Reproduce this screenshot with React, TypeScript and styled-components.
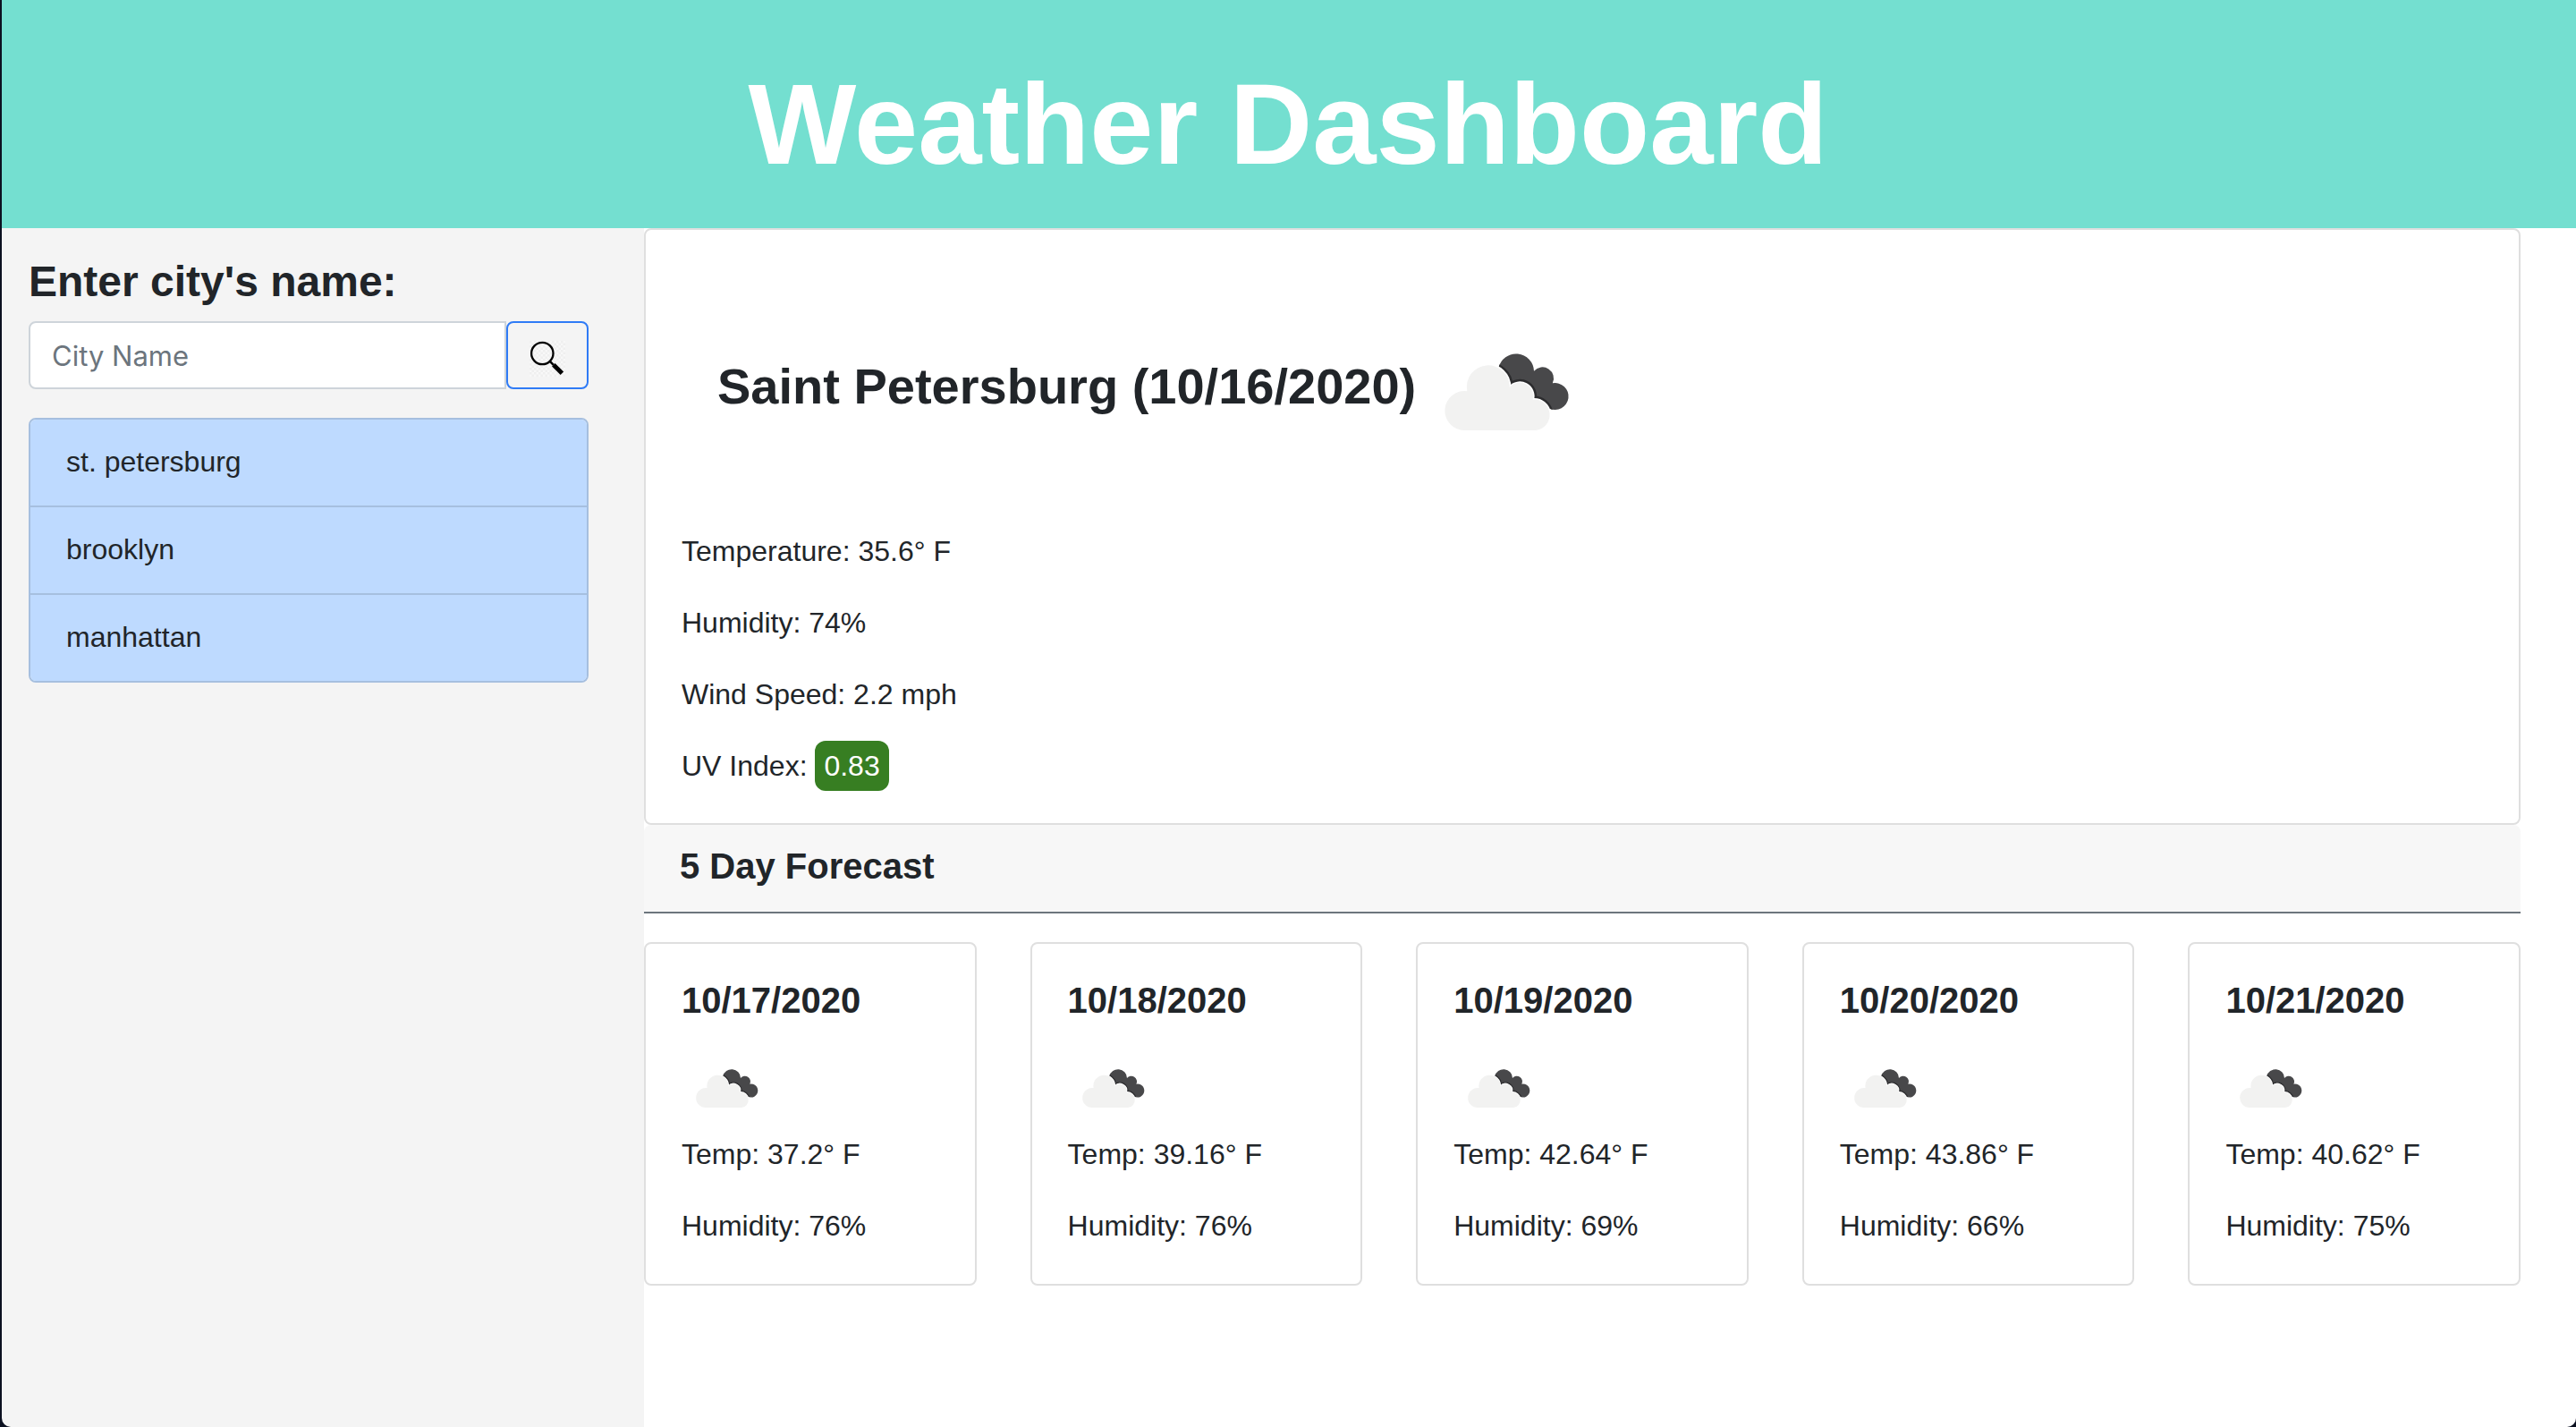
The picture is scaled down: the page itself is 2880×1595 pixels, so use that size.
import React, { useId } from "react";
import styled, { createGlobalStyle } from "styled-components";

const ink = "#212529";
const line = "#dfdfdf";
const frame = "#0b1020";

const GlobalStyle = createGlobalStyle`
  *, *::before, *::after { box-sizing: border-box; }
  body {
    margin: 0;
    background: #fff;
    color: ${ink};
    font-family: "Liberation Sans", "Helvetica Neue", Arial, sans-serif;
    font-size: 32px;
    line-height: 48px;
  }
  h1, h2, h3, p, ul { margin: 0; padding: 0; }
`;

const Page = styled.div`
  min-height: 100vh;
  display: flex;
  flex-direction: column;
`;

const WindowFrame = styled.div`
  position: fixed;
  inset: 0 0 0 2px;
  border-radius: 0 0 10px 10px;
  box-shadow: 0 0 0 16px ${frame};
  pointer-events: none;
`;

const Header = styled.header`
  padding: 62px 32px 39px;
  background: #74dfd0;
  color: #fff;
  text-align: center;
`;

const Title = styled.h1`
  font-size: 128px;
  line-height: 154px;
`;

const Layout = styled.div`
  flex: 1;
  display: grid;
  grid-template-columns: minmax(0, 1fr) minmax(0, 3fr);
`;

const Sidebar = styled.aside`
  padding: 31px 62px 32px 32px;
  background: #f4f4f4;
`;

const SearchLabel = styled.label`
  display: block;
  margin-bottom: 15px;
  font-size: 48px;
  line-height: 58px;
  font-weight: 700;
`;

const SearchRow = styled.div`
  display: flex;
  margin-bottom: 32px;
`;

const SearchInput = styled.input`
  flex: 1;
  min-width: 0;
  height: 76px;
  padding: 12px 24px;
  border: 2px solid #ced4da;
  border-radius: 8px 0 0 8px;
  background: #fff;
  color: ${ink};
  font-family: Inter, "Liberation Sans", sans-serif;
  font-size: 31px;
  &::placeholder { color: #6c757d; opacity: 1; }
`;

const SearchButton = styled.button`
  display: flex;
  align-items: center;
  justify-content: center;
  width: 92px;
  height: 76px;
  padding: 8px 0 0;
  border: 2px solid #2f7bf6;
  border-radius: 8px;
  background: transparent;
`;

const CityList = styled.ul`
  list-style: none;
  border: 2px solid #a6bfdf;
  border-radius: 8px;
  overflow: hidden;
`;

const CityItem = styled.li`
  & + & { border-top: 2px solid #a6bfdf; }
`;

const CityButton = styled.button`
  display: block;
  width: 100%;
  padding: 23px 40px 25px;
  border: 0;
  background: #bedaff;
  color: ${ink};
  font: inherit;
  text-align: left;
`;

const Main = styled.main`
  padding-right: 62px;
`;

const Card = styled.section`
  padding: 40px;
  border: 2px solid ${line};
  border-radius: 8px;
  background: #fff;
`;

const DayCard = styled(Card)`
  padding: 39px 40px 41px;
`;

const CurrentHeading = styled.div`
  display: flex;
  align-items: center;
  margin-bottom: 15px;
  padding: 40px;
`;

const CurrentTitle = styled.h2`
  padding-bottom: 10px;
  font-size: 56px;
  line-height: 68px;
`;

const Facts = styled.div`
  display: grid;
  gap: 32px;
`;

const UvBadge = styled.span`
  padding: 10px;
  border-radius: 12px;
  background: #377e22;
  color: #fff;
`;

const ForecastHeader = styled.header`
  padding: 22px 40px 27px;
  border-bottom: 2px solid #6c757d;
  border-radius: 8px 8px 0 0;
  background: #f7f7f7;
`;

const SubTitle = styled.h3`
  font-size: 40px;
  line-height: 48px;
`;

const ForecastGrid = styled.div`
  display: grid;
  grid-template-columns: repeat(5, 1fr);
  gap: 60px;
  padding-top: 32px;
`;

const DayIcon = styled.div`
  display: flex;
  margin-top: 24px;
`;

function SearchIcon() {
  const id = useId();
  return (
    <svg width="40" height="40" viewBox="0 0 40 40" aria-hidden="true">
      <defs>
        <pattern id={id} width="5" height="5" patternUnits="userSpaceOnUse">
          <rect width="5" height="5" fill="#f8f8f8" />
          <path d="M0 0h2.5v2.5H0zM2.5 2.5H5V5H2.5z" fill="#efefef" />
        </pattern>
      </defs>
      <rect width="40" height="40" fill={`url(#${id})`} />
      <circle cx="14.3" cy="14" r="12.2" fill="none" stroke="#000" strokeWidth="2.3" />
      <path d="M22.8 22.8l4 4" stroke="#000" strokeWidth="2.6" />
      <path d="M26.8 26.8l9.6 9.4" stroke="#000" strokeWidth="5" />
    </svg>
  );
}

function CloudIcon({ size }: { size: number }) {
  const id = useId();
  const front =
    "M54 144A22 22 0 1 1 57.3 100.2A24 24 0 1 1 104.8 96A15 15 0 0 1 130.6 109.7A17 17 0 0 1 134 144Z";
  const back =
    "M92.5 74A20 20 0 0 1 132 77.8A12.5 12.5 0 0 1 152.8 91.3A15 15 0 1 1 149 119.5L112 116L88 90Z";
  return (
    <svg width={size} height={size} viewBox="0 0 200 200" role="img" aria-label="Broken clouds">
      <clipPath id={id}>
        <path d={back} />
      </clipPath>
      <path d={back} fill="#48484a" />
      <g clipPath={`url(#${id})`}>
        <path d={front} fill="none" stroke="#2c2c2e" strokeWidth="8" />
      </g>
      <path d={front} fill="#f2f2f1" stroke="#fff" strokeWidth="3" />
      <path d={front} fill="#f2f2f1" />
    </svg>
  );
}

const cities = ["st. petersburg", "brooklyn", "manhattan"];

const forecast = [
  { date: "10/17/2020", temp: "37.2", humidity: 76 },
  { date: "10/18/2020", temp: "39.16", humidity: 76 },
  { date: "10/19/2020", temp: "42.64", humidity: 69 },
  { date: "10/20/2020", temp: "43.86", humidity: 66 },
  { date: "10/21/2020", temp: "40.62", humidity: 75 },
];

export default function App() {
  return (
    <Page>
      <GlobalStyle />
      <Header>
        <Title>Weather Dashboard</Title>
      </Header>
      <Layout>
        <Sidebar>
          <SearchLabel htmlFor="city">Enter city's name:</SearchLabel>
          <SearchRow>
            <SearchInput id="city" type="text" placeholder="City Name" />
            <SearchButton type="button" aria-label="Search">
              <SearchIcon />
            </SearchButton>
          </SearchRow>
          <CityList>
            {cities.map((city) => (
              <CityItem key={city}>
                <CityButton type="button">{city}</CityButton>
              </CityItem>
            ))}
          </CityList>
        </Sidebar>
        <Main>
          <Card>
            <CurrentHeading>
              <CurrentTitle>Saint Petersburg (10/16/2020)</CurrentTitle>
              <CloudIcon size={200} />
            </CurrentHeading>
            <Facts>
              <p>Temperature: 35.6° F</p>
              <p>Humidity: 74%</p>
              <p>Wind Speed: 2.2 mph</p>
              <p>
                UV Index: <UvBadge>0.83</UvBadge>
              </p>
            </Facts>
          </Card>
          <ForecastHeader>
            <SubTitle>5 Day Forecast</SubTitle>
          </ForecastHeader>
          <ForecastGrid>
            {forecast.map((day) => (
              <DayCard key={day.date}>
                <SubTitle>{day.date}</SubTitle>
                <DayIcon>
                  <CloudIcon size={100} />
                </DayIcon>
                <Facts>
                  <p>Temp: {day.temp}° F</p>
                  <p>Humidity: {day.humidity}%</p>
                </Facts>
              </DayCard>
            ))}
          </ForecastGrid>
        </Main>
      </Layout>
      <WindowFrame />
    </Page>
  );
}
